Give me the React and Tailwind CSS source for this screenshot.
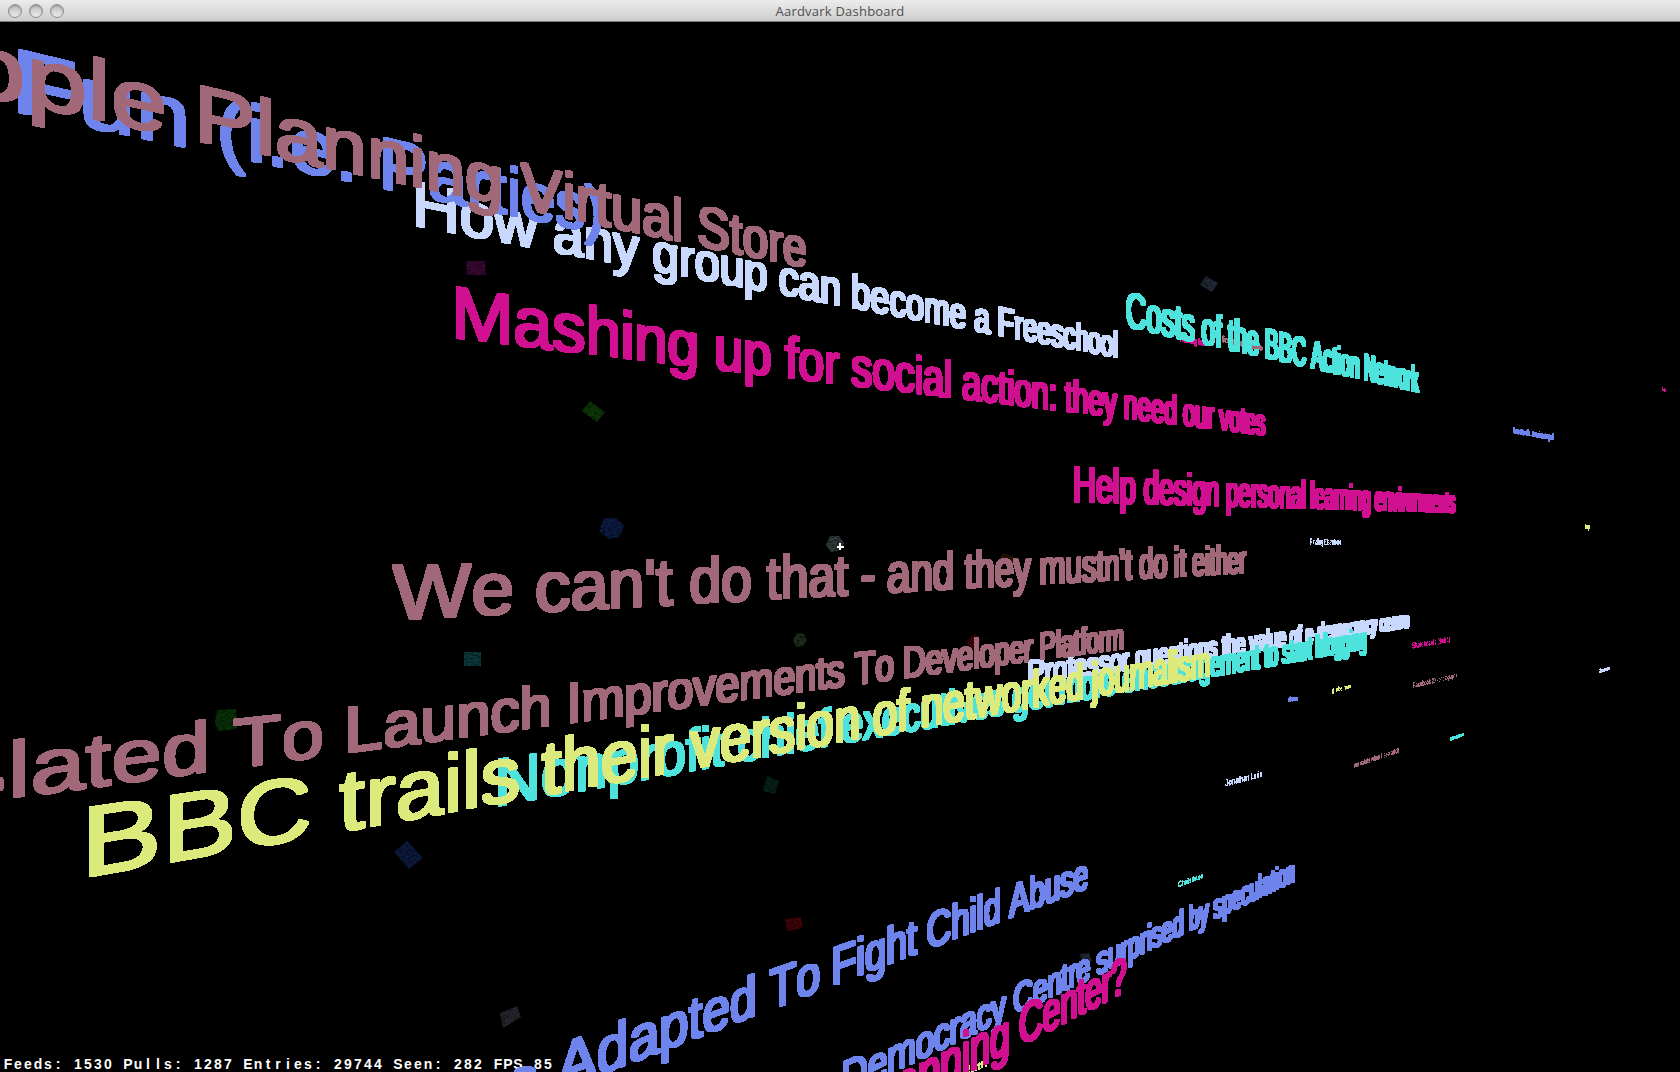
import React from "react";

const BLUE = "text-[#6e84ec]";
const MAUVE = "text-[#a06878]";
const PALE = "text-[#c8d8fc]";
const PINK = "text-[#d01090]";
const CYAN = "text-[#4de3dc]";
const LIME = "text-[#dcea7c]";

// Anchor: [char index, side (l/r/m), screen x, top y, baseline y]
const HEADLINES = [
  {
    text: "Professor questions the value of e-democracy centre",
    color: PALE,
    anchors: [
      [0, "l", 1028, 659.7, 688],
      [21, "l", 1226.5, 633, 654.3],
      [26, "l", 1265, 628, null],
      [35, "r", 1325, 620.7, null],
      [48, "l", 1396, 613, null],
      [50, "r", 1410, null, 628.7],
    ],
  },
  {
    text: "Nonprofit chief executives get more encouragement to start blogging",
    color: CYAN,
    anchors: [
      [0, "l", 497.9, null, null],
      [0, "r", 537.5, 751, 801],
      [3, "l", 610, null, null],
      [11, "l", 762, null, null],
      [12, "l", 786.4, 713.3, null],
      [16, "l", 842.5, null, null],
      [27, "l", 1011, null, null],
      [43, "r", 1211, null, null],
      [48, "r", 1261, null, 669],
      [59, "l", 1315.7, 634, 657.7],
      [66, "r", 1367, null, 650],
    ],
  },
  {
    text: "BBC trails their version of networked journalism",
    color: LIME,
    anchors: [
      [0, "l", 88.2, 803.3, 879.3],
      [1, "l", 168.8, 792, 864.7],
      [7, "l", 448, 751.7, 813.7],
      [8, "l", 466.6, 749.7, 810],
      [12, "l", 563.9, 735.3, 792],
      [14, "l", 641, 724.7, 779.3],
      [21, "l", 797, 702.3, 749.7],
      [28, "l", 921.4, null, 728],
      [34, "l", 1031, 669, 707],
      [36, "r", 1083.4, 663.3, 699],
      [47, "r", 1210.5, null, 676.7],
    ],
  },
  {
    text: "Slated To Launch Improvements To Developer Platform",
    color: MAUVE,
    anchors: [
      [1, "l", 13.4, 740, 798.7],
      [5, "r", 204.8, 720, 774],
      [7, "l", 234, 717.3, null],
      [7, "r", 281, 712.3, null],
      [10, "l", 348, 704.7, 754],
      [15, "l", 522, 686.3, 730.3],
      [17, "l", 570.2, 681.3, 723.7],
      [30, "l", 854, 651.3, null],
      [33, "l", 904, 646.3, 679.3],
      [37, "l", 972.9, 639.3, 669.3],
      [43, "l", 1039.8, 632, 659],
      [50, "r", 1124, null, 650],
    ],
  },
  {
    text: "We can't do that - and they mustn't do it either",
    color: MAUVE,
    anchors: [
      [0, "l", 392.3, 561.7, null],
      [0, "r", 472, 560, null],
      [0, "m", 432, null, 620.3],
      [5, "l", 611, null, 610],
      [9, "r", 720, 555.3, 603.7],
      [13, "l", 783, 554, 599.7],
      [21, "r", 954, 550.3, 590],
      [24, "l", 974.7, 550.7, 588.7],
      [28, "l", 1039, null, 584.7],
      [39, "l", 1173.3, 545.7, 576.7],
      [47, "r", 1247.6, null, 573],
    ],
  },
  {
    text: "Help design personal learning environments",
    color: PINK,
    anchors: [
      [0, "l", 1073.9, 464, 503],
      [2, "l", 1113, 467, 504.3],
      [5, "r", 1160, 470, 505.7],
      [12, "l", 1224.9, null, null],
      [19, "l", 1300.8, 479, 508.3],
      [21, "l", 1309.8, 480, null],
      [26, "l", 1349, 483, null],
      [33, "l", 1398, 486, null],
      [41, "r", 1455.7, null, 513],
    ],
  },
  {
    text: "Costs of the BBC Action Network",
    color: CYAN,
    anchors: [
      [0, "l", 1125.3, null, null],
      [0, "m", 1136.7, 292.5, 330],
      [13, "l", 1264.9, 327, 359.3],
      [17, "l", 1309.8, null, 369],
      [24, "l", 1362.9, 353, 381.7],
      [30, "l", 1412, 365, null],
      [30, "r", 1418.8, null, 391.7],
    ],
  },
  {
    text: "Mashing up for social action: they need our votes",
    color: PINK,
    anchors: [
      [0, "l", 456.1, 283, 340],
      [0, "r", 510, null, 345.7],
      [3, "l", 587.9, 304, 355.7],
      [9, "l", 743.6, null, null],
      [20, "l", 944, 359, 397.7],
      [31, "l", 1074.3, 379.3, 413.3],
      [38, "r", 1176.7, 395, 425],
      [48, "r", 1266, null, 435.3],
    ],
  },
  {
    text: "How any group can become a Freeschool",
    color: PALE,
    anchors: [
      [0, "l", 416.1, 179.3, 228.3],
      [0, "r", 456.1, null, 233.7],
      [12, "l", 744.6, null, null],
      [18, "l", 851.8, 273.3, 309],
      [27, "l", 998, 305.3, 336.3],
      [33, "l", 1075.9, 322.3, 350.5],
      [36, "r", 1117.6, 330, 358],
    ],
  },
  {
    text: "Fun (i.e. Parties)",
    color: BLUE,
    anchors: [
      [0, "l", 17.9, 47, 115],
      [1, "l", 82.9, null, null],
      [5, "l", 250, 103.3, 161.7],
      [6, "l", 272.1, null, 166.7],
      [8, "l", 341, null, 180.5],
      [10, "l", 382.9, 135.3, 189.7],
      [14, "l", 509.6, 165.7, 215.5],
      [17, "r", 602, null, null],
    ],
  },
  {
    text: "Apple Planning Virtual Store",
    color: MAUVE,
    anchors: [
      [2, "l", 31.8, null, null],
      [3, "l", 92.1, 55.3, 120.7],
      [6, "l", 198.9, 82.3, 143.3],
      [7, "l", 258.9, 97, 155.3],
      [15, "l", 519.3, 160.3, null],
      [21, "l", 672.9, 198.3, 242],
      [27, "r", 806.8, null, 267],
    ],
  },
  {
    text: "e Adapted To Fight Child Abuse",
    color: BLUE,
    anchors: [
      [2, "l", 559, null, null],
      [2, "m", 575, 1035, null],
      [3, "r", 625, 1020, 1067.7],
      [8, "r", 754.7, 974, 1018],
      [10, "l", 768.4, 968.7, null],
      [10, "r", 797, 959, null],
      [13, "l", 834, 945.7, 984.7],
      [16, "l", 887, 925.3, 965],
      [23, "r", 1000.7, 888.3, 922.7],
      [25, "l", 1008.3, null, 918],
      [26, "l", 1029, 876.3, null],
      [29, "r", 1088.7, null, 889],
    ],
  },
  {
    text: "e-Democracy Centre surprised by speculation",
    color: BLUE,
    anchors: [
      [2, "l", 842.3, 1061.3, null],
      [4, "l", 888, null, null],
      [12, "l", 1013.3, null, null],
      [12, "m", 1023, 979, 1011],
      [27, "r", 1183.7, 908.7, 935.7],
      [29, "l", 1189, 904.7, 932],
      [33, "l", 1222, null, null],
      [37, "l", 1258, 873.3, null],
      [42, "r", 1295, null, 881],
    ],
  },
  {
    text: "Shopping Center?",
    color: PINK,
    anchors: [
      [3, "l", 919, null, null],
      [5, "l", 962, 1031.3, null],
      [7, "r", 1009, null, null],
      [9, "l", 1019, null, null],
      [9, "m", 1031, 998.7, 1039],
      [11, "r", 1076.7, null, 1021.7],
      [12, "l", 1078, null, null],
      [15, "r", 1125.7, null, null],
      [15, "m", 1119, 959, 994.3],
    ],
  },
];

// Distant labels: [text, colour, left x, top, baseline, right x, top, baseline]
const LABELS = [
  ["Having fun", PINK, 1180, 336, 342, 1206, 341, 347],
  ["for the home", MAUVE, 1222, 336, 343, 1263, 345, 352],
  ["Tweets db. Jessica Ingall", BLUE, 1513, 428, 434, 1554, 435, 441],
  ["Finding Elsewhere", PALE, 1310, 539, 545, 1341, 539.5, 545],
  ["lap", LIME, 1585, 524, 529, 1590, 524, 529],
  ["io", PINK, 1662, 387, 391, 1666, 388, 392],
  ["Skateboards (draft 1)", PINK, 1412, 643, 649, 1450, 637, 642],
  ["Facebook 20 - photographs", MAUVE, 1413, 683, 688.5, 1457, 673, 677.5],
  ["globe here", LIME, 1332, 688, 693, 1351, 684, 688.5],
  ["clean", BLUE, 1288, 697, 702, 1298, 696, 701],
  ["James", PALE, 1599, 669, 673, 1610, 666, 670],
  ["skaplen", CYAN, 1450, 737, 741.5, 1464, 732, 736.5],
  ["our saints when I see addt", MAUVE, 1354, 763, 768, 1399, 747.5, 753],
  ["Jonathan Lurie", PALE, 1225, 780, 787, 1262, 771, 777],
  ["Christiane", CYAN, 1178, 882, 888, 1203, 873, 878.5],
  ["Ruth", LIME, 962, 1068, 1076, 987, 1060, 1067],
];

const CUBES = [
  ["466,261 485,261 486,275 467,275", "#3c0a34"],
  ["590,401 605,412 597,422 582,411", "#0e3a08"],
  ["1206,276 1218,283 1212,292 1200,285", "#242c3c"],
  ["604,518 616,518 624,526 619,537 608,539 599,531", "#0c1c46"],
  ["830,536 839,536 844,543 841,550 831,552 826,545", "#343e40"],
  ["464,652 481,652 481,666 464,666", "#0c3c3c"],
  ["797,633 804,634 807,640 803,646 796,647 793,640", "#20301a"],
  ["217,710 236,709 237,729 218,731 215,722", "#083408"],
  ["407,841 423,858 409,869 394,852", "#0c1c42"],
  ["975,634 981,640 977,648 970,647 967,640", "#420408"],
  ["1002,553 1014,557 1012,564 1000,560", "#2c1404"],
  ["767,776 779,781 775,794 763,791", "#06241c"],
  ["785,919 801,917 803,928 787,931", "#440408"],
  ["500,1013 517,1006 521,1017 503,1028", "#2a2832"],
  ["1079,954 1089,953 1092,961 1084,963", "#242a38"],
  ["539,222 550,222 549,227 540,227", "#040e0a"],
  ["924,1043 929,1042 929,1049 923,1050", "#0c0f10"],
];

// Pixels that the outline adds around a stroke.
const GROW_LEFT = 1;
const GROW_RIGHT = 2;
const GROW_Y = 1;

const ctx = document.createElement("canvas").getContext("2d");

function solve(rows, rhs) {
  const n = rows[0].length;
  const m = Array.from({ length: n }, (_, i) => {
    const line = Array.from({ length: n }, (_, j) =>
      rows.reduce((s, r) => s + r[i] * r[j], 0)
    );
    line.push(rows.reduce((s, r, k) => s + r[i] * rhs[k], 0));
    return line;
  });
  for (let i = 0; i < n; i++) {
    let p = i;
    for (let k = i + 1; k < n; k++) if (Math.abs(m[k][i]) > Math.abs(m[p][i])) p = k;
    [m[i], m[p]] = [m[p], m[i]];
    for (let k = 0; k < n; k++) {
      if (k === i) continue;
      const f = m[k][i] / m[i][i];
      for (let j = i; j <= n; j++) m[k][j] -= f * m[i][j];
    }
  }
  return m.map((line, i) => line[n] / line[i]);
}

// Fits a perspective that keeps upright strokes upright.
function project(text, anchors, size) {
  ctx.font = `${size}px "Liberation Sans"`;
  ctx.fontKerning = "none";
  const base = size * 0.85;
  const rows = [];
  const rhs = [];
  for (const [i, side, X, top, bottom] of anchors) {
    const start = ctx.measureText(text.slice(0, i)).width;
    const g = ctx.measureText(text[i]);
    const left = start - g.actualBoundingBoxLeft;
    const right = start + g.actualBoundingBoxRight;
    const x = (side === "l" ? left : side === "r" ? right : (left + right) / 2) / 1000;
    const sx = (X + (side === "l" ? GROW_LEFT : side === "r" ? -GROW_RIGHT : -0.5)) / 1000;
    rows.push([x, 1, -x * sx, 0, 0, 0]);
    rhs.push(sx);
    const addY = (y, Y) => {
      const sy = Y / 1000;
      rows.push([0, 0, -x * sy, x, y / 1000, 1]);
      rhs.push(sy);
    };
    if (top !== null) addY(base - g.actualBoundingBoxAscent, top + GROW_Y);
    if (bottom !== null) addY(base, bottom - GROW_Y);
  }
  const [a, c, g, d, e, f] = solve(rows, rhs);
  return `matrix3d(${[a, d, 0, g / 1000, 0, e, 0, 0, 0, 0, 1, 0, c * 1000, f * 1000, 0, 1].join(",")})`;
}

function Headline({ text, color, anchors }) {
  return (
    <div className="absolute inset-0 overflow-hidden [filter:url(#thick)]">
      <div
        className={`absolute left-0 top-0 origin-top-left whitespace-pre font-['Liberation_Sans',sans-serif] text-[100px] leading-[100px] [font-kerning:none] ${color}`}
        style={{ transform: project(text, anchors, 100) }}
      >
        {text}
      </div>
    </div>
  );
}

function Label({ item }) {
  const [text, color, x0, t0, b0, x1, t1, b1] = item;
  ctx.font = 'bold 16px "Liberation Sans"';
  const w = ctx.measureText(text).width;
  const k = (b0 - t0) / (b1 - t1);
  const g = (k - 1) / w;
  const e = (b0 - t0) / 11.6;
  const a = (x1 * k - x0) / w;
  const f = b0 - e * 13.6;
  const d = (b1 * k - b0) / w;
  return (
    <div className="absolute inset-0 overflow-hidden [filter:url(#crisp)]">
      <div
        className={`absolute left-0 top-0 origin-top-left whitespace-pre font-['Liberation_Sans',sans-serif] text-[16px] font-bold leading-[16px] ${color}`}
        style={{ transform: `matrix3d(${[a, d, 0, g, 0, e, 0, 0, 0, 0, 1, 0, x0, f, 0, 1].join(",")})` }}
      >
        {text}
      </div>
    </div>
  );
}

function TitleBar() {
  return (
    <header className="relative flex h-[22px] items-center justify-center border-b border-[#7c7c7c] bg-linear-to-b from-[#ececec] to-[#cdcdcd]">
      <div className="absolute left-2 top-1 flex gap-[7px]">
        {[0, 1, 2].map((i) => (
          <span
            key={i}
            className="size-[14px] rounded-full border border-[#8c8c8c] bg-linear-to-b from-[#bdbdbd] to-[#ececec] shadow-[inset_0_1px_2px_rgba(0,0,0,0.25)]"
          />
        ))}
      </div>
      <h1 className="whitespace-pre font-['Open_Sans',sans-serif] text-[13px] leading-[20px] tracking-[0.22px] text-[#505050]">
        Aardvark Dashboard
      </h1>
    </header>
  );
}

const STATUS = "Feeds: 1530 Pulls: 1287 Entries: 29744 Seen: 282 FPS 85";

export default function App() {
  return (
    <div className="relative flex h-[1072px] w-[1680px] flex-col overflow-hidden bg-black">
      <TitleBar />
      <svg className="absolute inset-0" width="1680" height="1072">
        <defs>
          <filter id="thick" x="0" y="0" width="100%" height="100%" colorInterpolationFilters="sRGB">
            <feComponentTransfer>
              <feFuncA type="discrete" tableValues="0 1" />
            </feComponentTransfer>
            <feMorphology operator="dilate" radius="1" result="near" />
            <feOffset in="near" dx="1" dy="0" result="shifted" />
            <feMerge>
              <feMergeNode in="shifted" />
              <feMergeNode in="near" />
            </feMerge>
          </filter>
          <filter id="crisp" x="0" y="0" width="100%" height="100%" colorInterpolationFilters="sRGB">
            <feComponentTransfer>
              <feFuncA type="discrete" tableValues="0 1 1 1 1 1" />
            </feComponentTransfer>
          </filter>
          <filter id="grain" x="0" y="0" width="100%" height="100%" colorInterpolationFilters="sRGB">
            <feTurbulence type="fractalNoise" baseFrequency="0.35 0.6" numOctaves="2" result="n" />
            <feColorMatrix in="n" type="matrix" values="0 0 0 0 0  0 0 0 0 0  0 0 0 0 0  1.4 0 0 0 -0.5" result="dark" />
            <feComposite in="dark" in2="SourceAlpha" operator="in" result="spots" />
            <feMerge>
              <feMergeNode in="SourceGraphic" />
              <feMergeNode in="spots" />
            </feMerge>
          </filter>
        </defs>
        <g filter="url(#grain)">
          {CUBES.map(([points, fill]) => (
            <polygon key={points} points={points} fill={fill} />
          ))}
        </g>
        <path d="M840 543v7M836.5 546.5h7" stroke="#fff" strokeWidth="2" shapeRendering="crispEdges" />
      </svg>
      <footer className="mt-auto flex h-[17px] pl-[3px] font-['Liberation_Sans',sans-serif] text-[14px] font-bold leading-[18px] text-white">
        {STATUS.split("").map((ch, i) => (
          <span key={i} className="w-[10px] whitespace-pre text-center">
            {ch}
          </span>
        ))}
      </footer>
      {LABELS.map((item) => (
        <Label key={item[0]} item={item} />
      ))}
      {HEADLINES.map((h) => (
        <Headline key={h.text} {...h} />
      ))}
    </div>
  );
}
